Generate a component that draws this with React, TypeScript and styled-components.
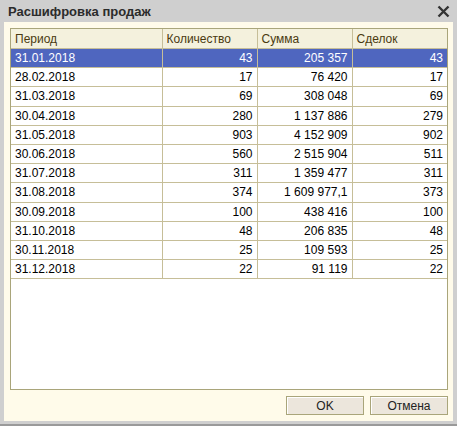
import React from "react";
import styled, { createGlobalStyle } from "styled-components";

const Global = createGlobalStyle`
  html, body { margin: 0; padding: 0; background: #fff; }
  body { font-family: "Liberation Sans", Arial, sans-serif; }
`;

const Window = styled.div`
  width: 457px;
  height: 426px;
  box-sizing: border-box;
  background: #cfcfcf;
  display: flex;
  flex-direction: column;
  padding: 0 4px 4px 4px;
  border-bottom: 2px solid #9a9a9a;
`;

const TitleBar = styled.div`
  height: 22px;
  display: flex;
  align-items: center;
  justify-content: space-between;
  padding: 0 3px 0 4px;
  flex-shrink: 0;
`;

const Title = styled.div`
  font-weight: bold;
  font-size: 13px;
  color: #2b2b2b;
`;

const Body = styled.div`
  flex: 1;
  background: #fffbea;
  display: flex;
  flex-direction: column;
  padding: 6px 5px 6px 6px;
  box-sizing: border-box;
`;

const TableBox = styled.div`
  height: 362px;
  border: 1px solid #a9a57a;
  background: #fff;
  box-sizing: border-box;
  overflow: hidden;
`;

const Table = styled.table`
  width: 100%;
  border-collapse: collapse;
  table-layout: fixed;
  font-size: 12px;
`;

const Th = styled.th`
  background: #f4f1dd;
  color: #4a3a10;
  font-weight: normal;
  text-align: left;
  height: 19px;
  padding: 0 4px;
  border-right: 1px solid #c6be98;
  border-bottom: 1px solid #c6be98;
  &:last-child { border-right: none; }
`;

const Td = styled.td<{ $num?: boolean; $sel?: boolean }>`
  height: 18.2px;
  padding: 0 4px;
  text-align: ${(p) => (p.$num ? "right" : "left")};
  color: ${(p) => (p.$sel ? "#fff" : "#000")};
  background: ${(p) => (p.$sel ? "#4f66bf" : "#fff")};
  border-right: 1px solid #c6be98;
  border-bottom: 1px solid #c6be98;
  white-space: nowrap;
  &:last-child { border-right: none; }
`;

const Footer = styled.div`
  display: flex;
  justify-content: flex-end;
  gap: 6px;
  margin-top: 6px;
`;

const Button = styled.button`
  width: 78px;
  height: 19px;
  font-family: "Liberation Sans", Arial, sans-serif;
  font-size: 12px;
  color: #222;
  background: #ece6dc;
  border: 1px solid #a9a57a;
  box-shadow: inset 1px 1px 0 #fff;
  padding: 0;
`;

const rows: [string, string, string, string][] = [
  ["31.01.2018", "43", "205 357", "43"],
  ["28.02.2018", "17", "76 420", "17"],
  ["31.03.2018", "69", "308 048", "69"],
  ["30.04.2018", "280", "1 137 886", "279"],
  ["31.05.2018", "903", "4 152 909", "902"],
  ["30.06.2018", "560", "2 515 904", "511"],
  ["31.07.2018", "311", "1 359 477", "311"],
  ["31.08.2018", "374", "1 609 977,1", "373"],
  ["30.09.2018", "100", "438 416", "100"],
  ["31.10.2018", "48", "206 835", "48"],
  ["30.11.2018", "25", "109 593", "25"],
  ["31.12.2018", "22", "91 119", "22"],
];

const CloseIcon = () => (
  <svg width="13" height="13" viewBox="0 0 13 13">
    <path d="M1.5 1.5 L11.5 11.5 M11.5 1.5 L1.5 11.5" stroke="#333" strokeWidth="2.4" />
  </svg>
);

export default function App() {
  return (
    <>
      <Global />
      <Window>
        <TitleBar>
          <Title>Расшифровка продаж</Title>
          <CloseIcon />
        </TitleBar>
        <Body>
          <TableBox>
            <Table>
              <colgroup>
                <col style={{ width: 151 }} />
                <col style={{ width: 95 }} />
                <col style={{ width: 95 }} />
                <col />
              </colgroup>
              <thead>
                <tr>
                  <Th>Период</Th>
                  <Th>Количество</Th>
                  <Th>Сумма</Th>
                  <Th>Сделок</Th>
                </tr>
              </thead>
              <tbody>
                {rows.map((r, i) => (
                  <tr key={r[0]}>
                    <Td $sel={i === 0}>{r[0]}</Td>
                    <Td $num $sel={i === 0}>{r[1]}</Td>
                    <Td $num $sel={i === 0}>{r[2]}</Td>
                    <Td $num $sel={i === 0}>{r[3]}</Td>
                  </tr>
                ))}
              </tbody>
            </Table>
          </TableBox>
          <Footer>
            <Button>OK</Button>
            <Button>Отмена</Button>
          </Footer>
        </Body>
      </Window>
    </>
  );
}
